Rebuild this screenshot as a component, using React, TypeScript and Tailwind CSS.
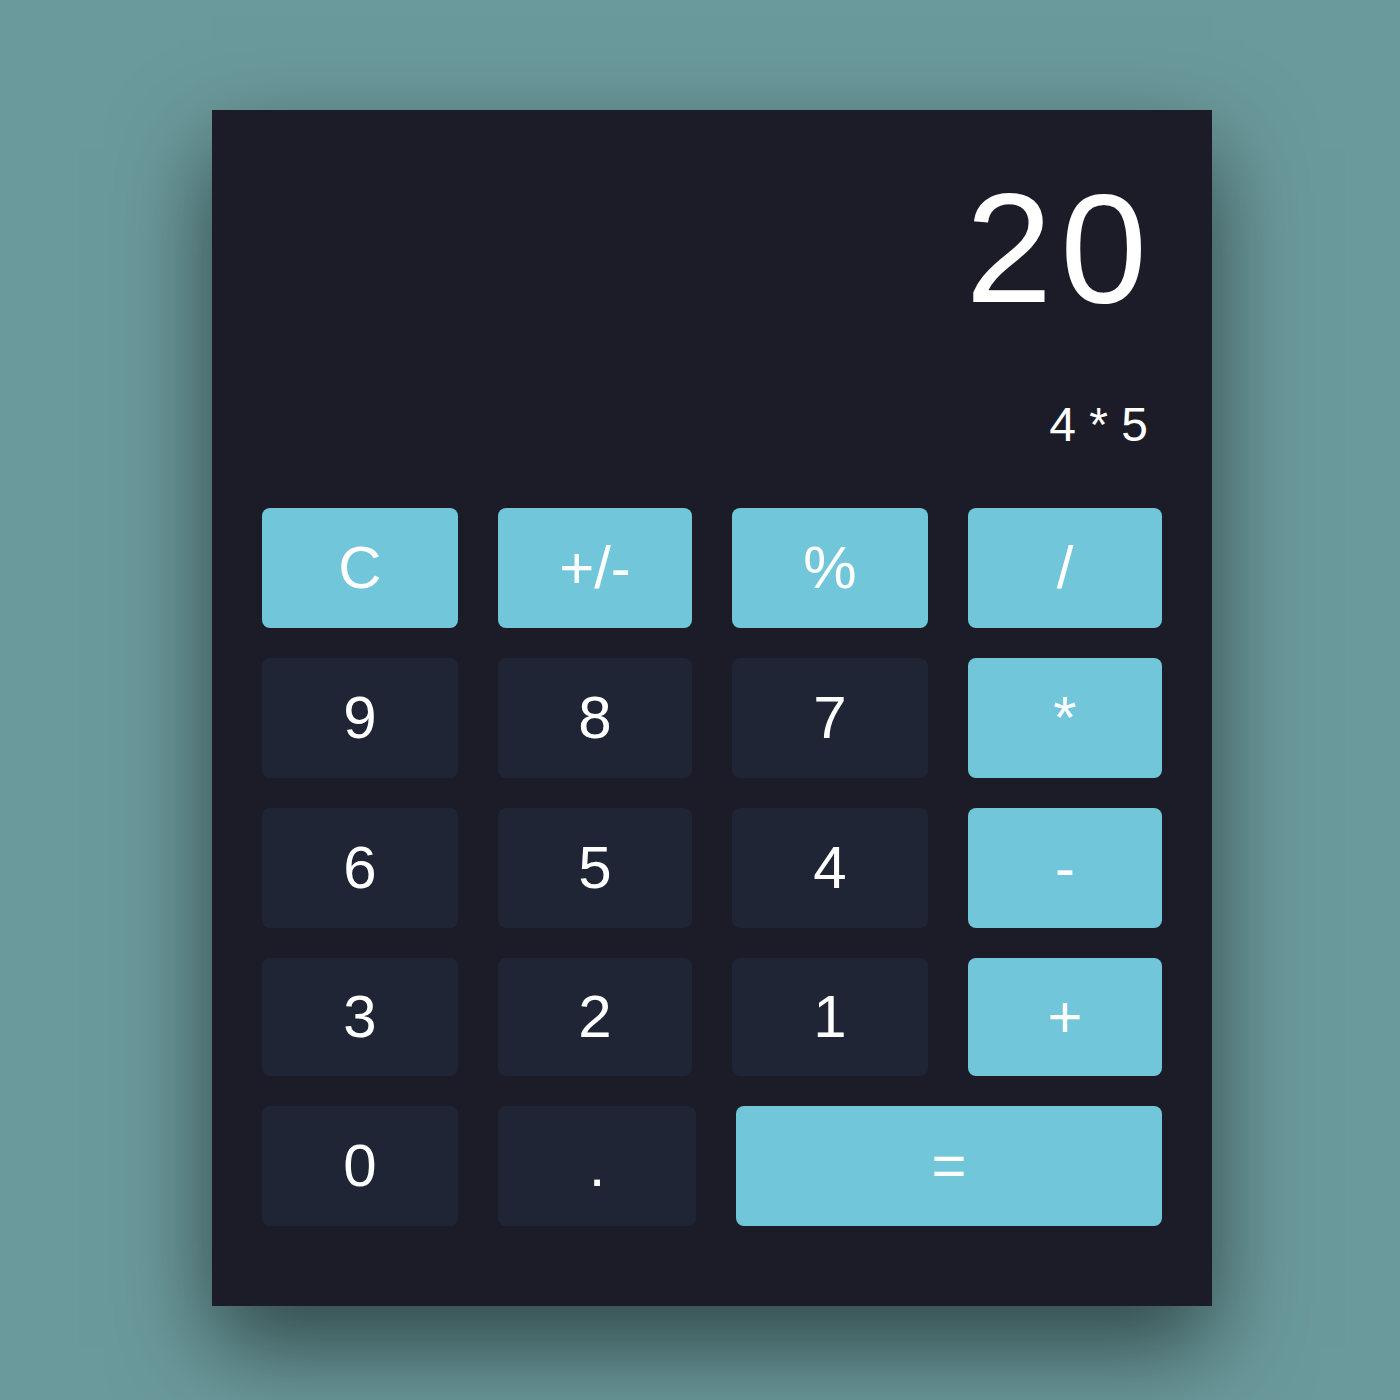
import React from "react";

type Key = { label: string; accent?: boolean; w: string };

const rows: Key[][] = [
  [
    { label: "C", accent: true, w: "w-[196px]" },
    { label: "+/-", accent: true, w: "w-[194px]" },
    { label: "%", accent: true, w: "w-[196px]" },
    { label: "/", accent: true, w: "w-[194px]" },
  ],
  [
    { label: "9", w: "w-[196px]" },
    { label: "8", w: "w-[194px]" },
    { label: "7", w: "w-[196px]" },
    { label: "*", accent: true, w: "w-[194px]" },
  ],
  [
    { label: "6", w: "w-[196px]" },
    { label: "5", w: "w-[194px]" },
    { label: "4", w: "w-[196px]" },
    { label: "-", accent: true, w: "w-[194px]" },
  ],
  [
    { label: "3", w: "w-[196px]" },
    { label: "2", w: "w-[194px]" },
    { label: "1", w: "w-[196px]" },
    { label: "+", accent: true, w: "w-[194px]" },
  ],
  [
    { label: "0", w: "w-[196px]" },
    { label: ".", w: "w-[198px]" },
    { label: "=", accent: true, w: "w-[426px]" },
  ],
];

const CalcKey: React.FC<Key> = ({ label, accent, w }) => (
  <button
    className={`${w} h-full rounded-lg flex items-center justify-center text-[60px] leading-none text-white ${
      accent ? "bg-[#71c6d9]" : "bg-[#1f2535]"
    }`}
  >
    {label}
  </button>
);

export default function App() {
  return (
    <div className="w-[1400px] h-[1400px] bg-[#6b9a9c] pl-[212px] pt-[110px] font-['Liberation_Sans',Arial,sans-serif]">
      <div className="w-[1000px] h-[1196px] bg-[#1c1c28] shadow-[0_40px_90px_rgba(0,0,0,0.55)] flex flex-col">
        <div className="pt-[60px] flex flex-col items-end text-white">
          <div className="text-[156px] leading-none tracking-[8px] pr-[57px]">20</div>
          <div className="mt-[75px] text-[48px] leading-none pr-[64px]">4 * 5</div>
        </div>
        <div className="mt-[59px] px-[50px] flex flex-col gap-[30px]">
          {rows.map((row, i) => (
            <div key={i} className={`flex gap-[40px] ${i === 3 ? "h-[118px]" : "h-[120px]"}`}>
              {row.map((k) => (
                <CalcKey key={k.label} {...k} />
              ))}
            </div>
          ))}
        </div>
      </div>
    </div>
  );
}
